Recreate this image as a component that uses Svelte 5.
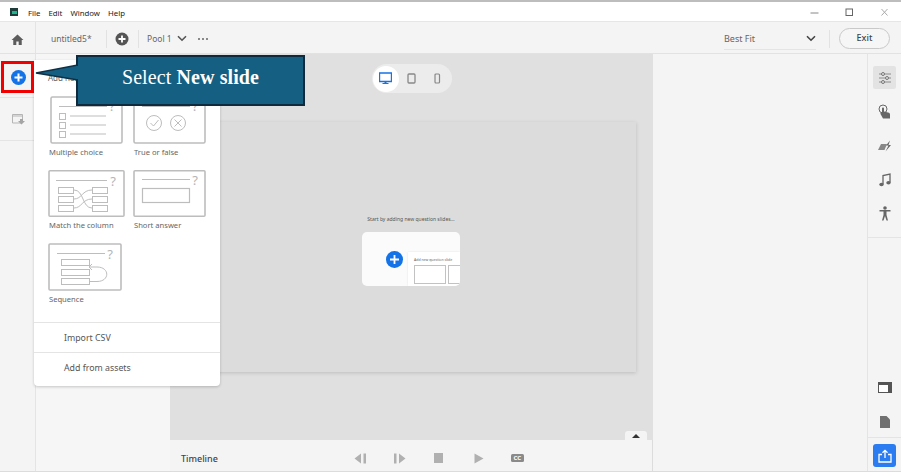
<script>
	const menus = ['File', 'Edit', 'Window', 'Help'];
</script>

<div class="app">
	<header class="titlebar">
		<div class="logo"><span></span></div>
		<nav class="menus">
			{#each menus as m}<span>{m}</span>{/each}
		</nav>
		<div class="winbtns">
			<svg width="9" height="9" viewBox="0 0 9 9"><path d="M0.500 5h8" stroke="#888" fill="none" /></svg>
			<svg width="9" height="9" viewBox="0 0 9 9"><rect x="1" y="1" width="6.500" height="6.500" stroke="#666" fill="none" /></svg>
			<svg width="9" height="9" viewBox="0 0 9 9"><path d="M1.500 1l6 6.500M7.500 1l-6 6.500" stroke="#aaa" fill="none" /></svg>
		</div>
	</header>

	<div class="toolbar">
		<button class="home" aria-label="Home">
			<svg width="13" height="11" viewBox="0 0 15 13"><path d="M7.500 0.500L0.500 7h2v6h3.600V9h2.800v4h3.600V7h2z" fill="#5c5c5c" /></svg>
		</button>
		<span class="docname">untitled5*</span>
		<i class="sep"></i>
		<svg class="addround" width="14" height="14" viewBox="0 0 14 14">
			<circle cx="7" cy="7" r="6.500" fill="#555" />
			<path d="M7 3.500v7M3.500 7h7" stroke="#fff" stroke-width="1.800" />
		</svg>
		<i class="sep"></i>
		<span class="pool">Pool 1</span>
		<svg class="chev" width="10" height="7" viewBox="0 0 10 7"><path d="M1 1.200l4 4 4-4" stroke="#555" stroke-width="1.600" fill="none" /></svg>
		<span class="dots"><b></b><b></b><b></b></span>
		<div class="fit">
			<span>Best Fit</span>
			<svg width="10" height="7" viewBox="0 0 10 7"><path d="M1 1.200l4 4 4-4" stroke="#444" stroke-width="1.600" fill="none" /></svg>
		</div>
		<i class="sep exit-sep"></i>
		<button class="exit">Exit</button>
	</div>

	<div class="body">
		<aside class="rail">
			<div class="rail-cell active">
				<svg width="15" height="15" viewBox="0 0 15 15">
					<circle cx="7.500" cy="7.500" r="7.500" fill="#1473e6" />
					<path d="M7.500 3.500v8M3.500 7.500h8" stroke="#fff" stroke-width="2" />
				</svg>
			</div>
			<div class="rail-cell">
				<svg width="15" height="13" viewBox="0 0 15 13">
					<path d="M10 10H1.500V1.500h10V6" stroke="#b5b5b5" fill="none" />
					<path d="M1.500 3h10" stroke="#b5b5b5" />
					<path d="M9 6h3v2h2l-3.500 3.500L7 8h2z" fill="#a5a5a5" />
				</svg>
			</div>
		</aside>

		<div class="leftpanel"></div>

		<main class="center">
			<div class="stage">
				<div class="devices">
					<span class="dev on">
						<svg width="13" height="13" viewBox="0 0 13 13">
							<path d="M0.500 1h12v8.500H0.500z" fill="#fff" stroke="#1473e6" stroke-width="1.400" />
							<path d="M5.500 9.500h2v1.500h2v1H3.500v-1h2z" fill="#1473e6" />
						</svg>
					</span>
					<span class="dev">
						<svg width="9" height="11" viewBox="0 0 9 11"><rect x="1" y="1" width="7" height="9" rx="1" fill="none" stroke="#888" stroke-width="1.300" /></svg>
					</span>
					<span class="dev">
						<svg width="7" height="11" viewBox="0 0 7 11"><rect x="1" y="1" width="4.500" height="9" rx="1" fill="none" stroke="#888" stroke-width="1.200" /></svg>
					</span>
				</div>
				<div class="slide">
					<p class="start">Start by adding new question slides...</p>
					<div class="startcard">
						<svg class="bigplus" width="17" height="17" viewBox="0 0 17 17">
							<circle cx="8.500" cy="8.500" r="8.500" fill="#1473e6" />
							<path d="M8.500 4v9M4 8.500h9" stroke="#fff" stroke-width="1.800" />
						</svg>
						<div class="minipanel">
							<span>Add new question slide</span>
							<div class="minirow"><i></i><i></i></div>
						</div>
					</div>
				</div>
				<button class="collapse" aria-label="Expand timeline"><i></i></button>
			</div>
			<div class="timeline">
				<span class="tl-title">Timeline</span>
				<div class="controls">
					<svg width="12" height="11" viewBox="0 0 12 11"><path d="M7 0.500v10L0.500 5.500zM9.500 0.500H12v10H9.500z" fill="#b0b0b0" /></svg>
					<svg width="12" height="11" viewBox="0 0 12 11"><path d="M0 0.500h2.500v10H0zM5 0.500v10l6.500-5z" fill="#b0b0b0" /></svg>
					<svg width="9" height="10" viewBox="0 0 9 10"><rect width="9" height="10" fill="#b0b0b0" /></svg>
					<svg class="play" width="10" height="11" viewBox="0 0 10 11"><path d="M0.500 0.500v10l9-5z" fill="#b0b0b0" /></svg>
					<span class="cc">CC</span>
				</div>
			</div>
		</main>

		<div class="props"></div>

		<aside class="toolrail">
			<div class="tools">
				<span class="tool selected">
					<svg width="14" height="14" viewBox="0 0 14 14" fill="none" stroke="#777">
						<path d="M1 3h12M1 7h12M1 11h12" stroke-width="0.800" />
						<circle cx="5" cy="3" r="1.500" fill="#e3e3e3" />
						<circle cx="9" cy="7" r="1.500" fill="#e3e3e3" />
						<circle cx="5" cy="11" r="1.500" fill="#e3e3e3" />
					</svg>
				</span>
				<span class="tool">
					<svg width="13" height="15" viewBox="0 0 13 15">
						<circle cx="5" cy="5" r="4" fill="none" stroke="#666" />
						<path d="M4 4.500c0-1.500 2-1.500 2 0v3l4 1c1.500.4 2 1 2 2V14.500H5L2.500 10c-.5-1 .8-1.800 1.500-.8z" fill="#666" />
					</svg>
				</span>
				<span class="tool">
					<svg width="15" height="12" viewBox="0 0 15 12">
						<path d="M1 10L4 4h6l-2.500 6z" fill="#888" />
						<path d="M13 0.500L9 5.500h2.500L8.500 11.500 14 5H11.500z" fill="#666" />
					</svg>
				</span>
				<span class="tool">
					<svg width="12" height="14" viewBox="0 0 12 14">
						<path d="M4 11V2.500L11 1v8.500" fill="none" stroke="#666" stroke-width="1.300" />
						<ellipse cx="2.500" cy="11.500" rx="2.200" ry="1.800" fill="#666" />
						<ellipse cx="9.500" cy="9.800" rx="2.200" ry="1.800" fill="#666" />
					</svg>
				</span>
				<span class="tool">
					<svg width="12" height="15" viewBox="0 0 12 15">
						<circle cx="6" cy="2" r="1.800" fill="#666" />
						<path d="M0.500 4h11v1.500H7.500V9l1.500 5.500H7.500L6 10l-1.500 4.500H3L4.500 9V5.500H0.500z" fill="#666" />
					</svg>
				</span>
			</div>
			<div class="tools-bottom">
				<span class="tool">
					<svg width="14" height="11" viewBox="0 0 14 11">
						<rect x="0.500" y="0.500" width="13" height="10" fill="#fff" stroke="#555" />
						<rect x="0.500" y="0.500" width="13" height="2.500" fill="#555" />
						<rect x="10" y="0.500" width="3.500" height="10" fill="#555" />
					</svg>
				</span>
				<span class="tool">
					<svg width="10" height="12" viewBox="0 0 10 12"><path d="M0 0h6.500L10 3.500V12H0z" fill="#707070" /></svg>
				</span>
				<div class="share-wrap">
					<button class="share" aria-label="Share">
						<svg width="14" height="14" viewBox="0 0 14 14" fill="none" stroke="#fff" stroke-width="1.300">
							<path d="M4 5.500H1v7.500h12V5.500h-3" />
							<path d="M7 9V1.500M4.500 3.800L7 1.300l2.500 2.500" />
						</svg>
					</button>
				</div>
			</div>
		</aside>
	</div>

	<!-- popover over the stage -->
	<div class="popover">
		<p class="pop-title">Add new question slide</p>
		<div class="types">
			<figure>
				<svg class="inset" width="73" height="48" viewBox="0 0 73 48">
					<g fill="none" stroke="#bdbdbd">
						<rect x="1" y="1" width="71" height="46" rx="1.500" stroke-width="1.600" />
						<path d="M9 10.500h48M20 20h36M20 29h36M20 38h36" />
						<rect x="9.500" y="17.500" width="6" height="6" />
						<rect x="9.500" y="26.500" width="6" height="6" />
						<rect x="9.500" y="35.500" width="6" height="6" />
					</g>
					<text x="62" y="15" text-anchor="middle">?</text>
				</svg>
				<figcaption>Multiple choice</figcaption>
			</figure>
			<figure>
				<svg width="73" height="48" viewBox="0 0 73 48">
					<g fill="none" stroke="#bdbdbd">
						<rect x="1" y="1" width="71" height="46" rx="1.500" stroke-width="1.600" />
						<path d="M9 10.500h48" />
						<circle cx="21" cy="27" r="7.500" />
						<path d="M17.500 27l3 3 5-6" />
						<circle cx="45" cy="27" r="7.500" />
						<path d="M41.500 23.500l7 7M48.500 23.500l-7 7" />
					</g>
					<text x="62" y="15" text-anchor="middle">?</text>
				</svg>
				<figcaption>True or false</figcaption>
			</figure>
			<figure>
				<svg width="77" height="47" viewBox="0 0 77 47">
					<g fill="none" stroke="#bdbdbd">
						<rect x="1" y="0.800" width="75" height="45.400" rx="1" stroke-width="1.600" />
						<path d="M8 10.500h51" />
						<rect x="10.500" y="17.500" width="15" height="6" />
						<rect x="10.500" y="26.500" width="15" height="6" />
						<rect x="10.500" y="35.500" width="15" height="6" />
						<rect x="44.500" y="17.500" width="15" height="6" />
						<rect x="44.500" y="26.500" width="15" height="6" />
						<rect x="44.500" y="35.500" width="15" height="6" />
						<path d="M26 20c10 0 8 18 18 18M26 29c8 0 8-9 18-9M26 38c8 0 8-9 18-9" />
					</g>
					<text x="65" y="16" text-anchor="middle">?</text>
				</svg>
				<figcaption>Match the column</figcaption>
			</figure>
			<figure>
				<svg width="73" height="47" viewBox="0 0 73 47">
					<g fill="none" stroke="#bdbdbd">
						<rect x="1" y="0.800" width="71" height="45.400" rx="1" stroke-width="1.600" />
						<path d="M9 9.500h48" />
						<rect x="9.500" y="18.500" width="47" height="14" stroke-width="1.200" />
					</g>
					<text x="62" y="15" text-anchor="middle">?</text>
				</svg>
				<figcaption>Short answer</figcaption>
			</figure>
			<figure>
				<svg width="74" height="48" viewBox="0 0 74 48">
					<g fill="none" stroke="#bdbdbd">
						<rect x="1" y="1" width="72" height="46" rx="1" stroke-width="1.600" />
						<path d="M9 10.500h48" />
						<rect x="13.500" y="16.500" width="28" height="6" />
						<rect x="13.500" y="26.500" width="28" height="6" />
						<rect x="13.500" y="35.500" width="28" height="6" />
						<path d="M41 38.500h8c13 0 13-14.500 0-14.500h-8M44 21l-3 3 3 3" />
					</g>
					<text x="62" y="16" text-anchor="middle">?</text>
				</svg>
				<figcaption>Sequence</figcaption>
			</figure>
		</div>
		<div class="pop-row">Import CSV</div>
		<div class="pop-row last">Add from assets</div>
	</div>

	<!-- tutorial annotations -->
	<div class="redbox"></div>
	<div class="callout">
		<svg class="pointer" width="43" height="20" viewBox="0 0 43 20">
			<path d="M43 4L1 12 43 19z" fill="#156082" stroke="#0f2f44" stroke-width="1.500" />
			<path d="M41.500 5v13h2V5z" fill="#156082" />
		</svg>
		<span>Select <b>New slide</b></span>
	</div>
</div>

<style>
	:global(body) {
		margin: 0;
		background: #fff;
	}
	.app {
		position: relative;
		width: 901px;
		height: 475px;
		overflow: hidden;
		box-sizing: border-box;
		border-top: 2px solid #bdbdbd;
		font-family: 'Noto Sans', sans-serif;
		color: #4b4b4b;
		display: flex;
		flex-direction: column;
	}
	.titlebar {
		height: 20px;
		box-sizing: border-box;
		background: #fff;
		display: flex;
		align-items: center;
		border-bottom: 1px solid #e6e6e6;
		flex: none;
	}
	.logo {
		width: 8px;
		height: 8px;
		margin: 1px 0 0 10px;
		background: #1d3c3a;
		display: flex;
		align-items: center;
		justify-content: center;
	}
	.logo span {
		width: 5px;
		height: 3px;
		background: #1fb58f;
	}
	.menus {
		display: flex;
		gap: 8px;
		margin-left: 10px;
		padding-top: 2px;
		font-size: 7.800px;
		color: #222;
	}
	.winbtns {
		margin-left: auto;
		display: flex;
		gap: 26px;
		padding: 2px 12px 0 0;
	}
	.toolbar {
		height: 32px;
		box-sizing: border-box;
		padding-top: 2px;
		flex: none;
		background: #f4f4f4;
		border-bottom: 1px solid #e2e2e2;
		display: flex;
		align-items: center;
		font-size: 8.500px;
		color: #666;
	}
	.home {
		width: 36px;
		height: 31px;
		margin-top: -2px;
		border: 0;
		border-right: 1px solid #e4e4e4;
		background: none;
		padding: 4px 0 0;
		display: flex;
		align-items: center;
		justify-content: center;
		flex: none;
	}
	.docname {
		margin-left: 15px;
		width: 55px;
	}
	.sep {
		width: 1px;
		height: 18px;
		background: #e2e2e2;
		flex: none;
	}
	.addround {
		margin: 1px 9px 0 8px;
	}
	.pool {
		margin-left: 8px;
	}
	.chev {
		margin-left: 5px;
	}
	.dots {
		display: flex;
		gap: 2px;
		margin-left: 11px;
	}
	.dots b {
		width: 2px;
		height: 2px;
		background: #666;
		border-radius: 50%;
	}
	.fit {
		margin-left: auto;
		margin-top: 1px;
		width: 92px;
		box-sizing: border-box;
		height: 22px;
		border-bottom: 1px solid #e4e4e4;
		display: flex;
		align-items: center;
		justify-content: space-between;
		font-size: 9px;
	}
	.exit-sep {
		margin-left: 13px;
	}
	.exit {
		width: 51px;
		height: 21px;
		margin: 0 11px 0 9px;
		border: 1.500px solid #c9c9c9;
		border-radius: 11px;
		background: #f6f6f6;
		font: 500 9px 'Noto Sans', sans-serif;
		color: #444;
		padding: 0 0 2px;
	}
	.body {
		flex: 1;
		display: flex;
		min-height: 0;
		border-bottom: 1px solid #dcdcdc;
		margin-bottom: 3px;
	}
	.rail {
		width: 35px;
		flex: none;
		background: #f4f4f4;
		border-right: 1px solid #e4e4e4;
	}
	.rail-cell {
		height: 43px;
		display: flex;
		align-items: center;
		justify-content: center;
		border-bottom: 1px solid #e4e4e4;
		box-sizing: border-box;
		padding-left: 1px;
	}
	.rail-cell.active {
		height: 44px;
		padding-top: 4px;
	}
	.leftpanel {
		width: 134px;
		flex: none;
		background: #f6f6f6;
	}
	.center {
		width: 483px;
		flex: none;
		display: flex;
		flex-direction: column;
		background: #e0e0e0;
	}
	.stage {
		position: relative;
		flex: 1;
		display: flex;
		flex-direction: column;
		align-items: center;
		min-height: 0;
	}
	.devices {
		margin-top: 10px;
		height: 29px;
		width: 80px;
		border-radius: 15px;
		background: #ececec;
		display: flex;
		align-items: center;
		flex: none;
	}
	.dev {
		width: 26px;
		height: 26px;
		display: flex;
		align-items: center;
		justify-content: center;
		border-radius: 50%;
	}
	.dev.on {
		background: #fff;
		margin-left: 1px;
	}
	.slide {
		margin-top: 29px;
		margin-right: 5px;
		width: 454px;
		height: 250px;
		background: #dcdcdc;
		box-shadow: 0 1px 4px rgba(0, 0, 0, 0.16);
		display: flex;
		flex-direction: column;
		align-items: center;
		flex: none;
	}
	.start {
		margin: 94px 0 0 4px;
		font-size: 5px;
		line-height: 7px;
		color: #555;
	}
	.startcard {
		margin: 9px 0 0 4px;
		width: 98px;
		height: 54px;
		border-radius: 5px;
		background: #fbfbfb;
		display: flex;
		align-items: center;
		overflow: hidden;
	}
	.bigplus {
		margin-left: 24px;
		flex: none;
	}
	.minipanel {
		margin: 20px 0 0 5px;
		height: 34px;
		padding-left: 6px;
		flex: 1;
		background: #fff;
		box-shadow: 0 0 2px rgba(0, 0, 0, 0.1);
		overflow: hidden;
		white-space: nowrap;
	}
	.minipanel span {
		display: block;
		font-size: 3.500px;
		line-height: 5px;
		margin-top: 5px;
		color: #666;
	}
	.minirow {
		display: flex;
		gap: 2px;
		margin-top: 3px;
	}
	.minirow i {
		flex: none;
		width: 30px;
		height: 17px;
		border: 1px solid #c2c2c2;
	}
	.collapse {
		position: absolute;
		right: 6px;
		bottom: 0;
		width: 22px;
		height: 9px;
		border: 0;
		padding: 0;
		border-radius: 3px 3px 0 0;
		background: #f4f4f4;
		display: flex;
		align-items: center;
		justify-content: center;
	}
	.collapse i {
		border: 4px solid transparent;
		border-top: 0;
		border-bottom: 4px solid #333;
	}
	.timeline {
		height: 31px;
		box-sizing: border-box;
		padding-top: 5px;
		flex: none;
		background: #f4f4f4;
		display: flex;
		align-items: center;
		border-right: 1px solid #dcdcdc;
	}
	.tl-title {
		margin-left: 11px;
		font-size: 9px;
		font-weight: 500;
		color: #444;
	}
	.controls {
		margin-left: 136px;
		display: flex;
		align-items: center;
		gap: 28px;
	}
	.play {
		margin-left: 3px;
	}
	.cc {
		width: 13px;
		height: 8px;
		background: #8a8a8a;
		border-radius: 1.500px;
		color: #fff;
		font-size: 6px;
		font-weight: 700;
		line-height: 8px;
		text-align: center;
		margin-left: -1px;
	}
	.props {
		flex: 1;
		background: #f4f4f4;
	}
	.toolrail {
		width: 34px;
		flex: none;
		background: #f4f4f4;
		border-left: 1px solid #e4e4e4;
		display: flex;
		flex-direction: column;
		justify-content: space-between;
		box-sizing: border-box;
	}
	.tools {
		padding: 12px 0;
		border-bottom: 1px solid #e4e4e4;
		display: flex;
		flex-direction: column;
		align-items: center;
		gap: 11px;
	}
	.tool {
		width: 23px;
		height: 23px;
		display: flex;
		align-items: center;
		justify-content: center;
		border-radius: 2px;
	}
	.tool.selected {
		background: #e3e3e3;
	}
	.tools-bottom {
		display: flex;
		flex-direction: column;
		align-items: center;
		gap: 11px;
	}
	.share-wrap {
		width: 100%;
		margin-top: -7px;
		border-top: 1px solid #e4e4e4;
		display: flex;
		justify-content: center;
		padding: 6px 0 4px;
	}
	.share {
		width: 23px;
		height: 23px;
		border: 0;
		padding: 0;
		border-radius: 3px;
		background: #2a7cf0;
		display: flex;
		align-items: center;
		justify-content: center;
	}
	.popover {
		position: absolute;
		left: 34px;
		top: 58px;
		width: 186px;
		height: 326px;
		background: #fff;
		border-radius: 0 0 4px 4px;
		box-shadow: 0 1px 3px rgba(0, 0, 0, 0.2);
		box-sizing: border-box;
		font-size: 7.600px;
		color: #666;
		display: flex;
		flex-direction: column;
	}
	.pop-title {
		margin: 12px 0 0 14px;
		font-size: 8px;
		line-height: 12px;
	}
	.types {
		margin: 12px 0 0 14px;
		display: grid;
		grid-template-columns: 85px 85px;
		grid-template-rows: 74px 73px 74px;
		flex: 1;
	}
	figure {
		margin: 0;
	}
	figure svg {
		display: block;
	}
	figure svg.inset {
		margin-left: 2px;
	}
	figure text {
		font-size: 13px;
		font-family: 'Noto Sans', sans-serif;
		fill: #b5b5b5;
	}
	figcaption {
		margin: 2px 0 0 1px;
		line-height: 12px;
		color: #666;
		white-space: nowrap;
	}
	.pop-row {
		height: 30px;
		line-height: 31px;
		padding-left: 30px;
		border-top: 1px solid #e4e4e4;
		font-size: 8.800px;
		color: #555;
		flex: none;
		box-sizing: border-box;
	}
	.pop-row.last {
		height: 34px;
	}
	.redbox {
		position: absolute;
		left: 1px;
		top: 59px;
		width: 33px;
		height: 32px;
		box-sizing: border-box;
		border: 3px solid #f00000;
	}
	.callout {
		position: absolute;
		left: 76px;
		top: 53px;
		width: 229px;
		height: 51px;
		box-sizing: border-box;
		background: #156082;
		border: 2px solid #0f2a3d;
		color: #fff;
		display: flex;
		align-items: center;
		justify-content: center;
		padding-bottom: 7px;
		font: 20px 'Liberation Serif', serif;
		letter-spacing: 0.1px;
	}
	.pointer {
		position: absolute;
		left: -43px;
		top: 4px;
	}
</style>
